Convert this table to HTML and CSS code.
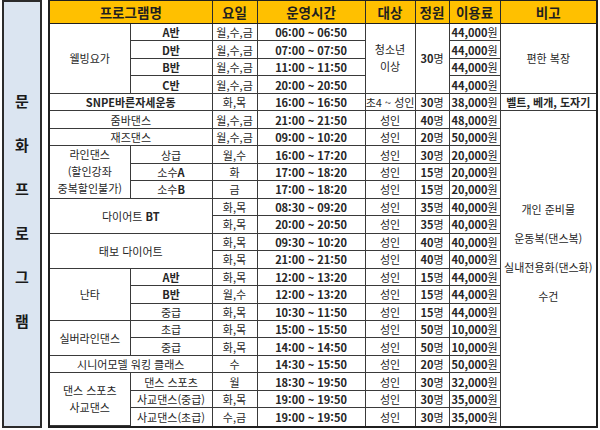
FILE: index.html
```html
<!DOCTYPE html>
<html lang="ko">
<head>
<meta charset="utf-8">
<title>문화프로그램</title>
<link rel="stylesheet" href="styles.css">
</head>
<body>
<div class="page">
  <div class="side">
    <span>문</span><span>화</span><span>프</span><span>로</span><span>그</span><span>램</span>
  </div>
  <div class="frame">
    <table class="tbl">
      <colgroup>
        <col class="c1"><col class="c2"><col class="c3"><col class="c4"><col class="c5"><col class="c6"><col class="c7"><col class="c8">
      </colgroup>
      <thead>
        <tr class="head">
          <th colspan="2">프로그램명</th><th>요일</th><th>운영시간</th><th>대상</th><th>정원</th><th>이용료</th><th>비고</th>
        </tr>
      </thead>
      <tbody>
        <tr><td rowspan="4">웰빙요가</td><td class="b">A반</td><td>월,수,금</td><td class="b">06:00 ~ 06:50</td><td rowspan="4" class="ml">청소년<br>이상</td><td rowspan="4" class="b">30<span class="u">명</span></td><td class="b">44,000<span class="u">원</span></td><td rowspan="4">편한 복장</td></tr>
        <tr class="in"><td class="b">D반</td><td>월,수,금</td><td class="b">07:00 ~ 07:50</td><td class="b">44,000<span class="u">원</span></td></tr>
        <tr class="in"><td class="b">B반</td><td>월,수,금</td><td class="b">11:00 ~ 11:50</td><td class="b">44,000<span class="u">원</span></td></tr>
        <tr class="in"><td class="b">C반</td><td>월,수,금</td><td class="b">20:00 ~ 20:50</td><td class="b">44,000<span class="u">원</span></td></tr>
        <tr><td colspan="2" class="b">SNPE바른자세운동</td><td>화,목</td><td class="b">16:00 ~ 16:50</td><td>초4 ~ 성인</td><td class="b">30<span class="u">명</span></td><td class="b">38,000<span class="u">원</span></td><td class="b">벨트, 베개, 도자기</td></tr>
        <tr><td colspan="2">줌바댄스</td><td>월,수,금</td><td class="b">21:00 ~ 21:50</td><td>성인</td><td class="b">40<span class="u">명</span></td><td class="b">48,000<span class="u">원</span></td>
          <td rowspan="18" class="note"><div class="notes"><span>개인 준비물</span><span>운동복(댄스복)</span><span>실내전용화(댄스화)</span><span>수건</span></div></td></tr>
        <tr><td colspan="2">재즈댄스</td><td>월,수,금</td><td class="b">09:00 ~ 10:20</td><td>성인</td><td class="b">20<span class="u">명</span></td><td class="b">50,000<span class="u">원</span></td></tr>
        <tr><td rowspan="3" class="ml">라인댄스<br>(할인강좌<br>중복할인불가)</td><td>상급</td><td>월,수</td><td class="b">16:00 ~ 17:20</td><td>성인</td><td class="b">30<span class="u">명</span></td><td class="b">20,000<span class="u">원</span></td></tr>
        <tr class="in"><td>소수<b>A</b></td><td>화</td><td class="b">17:00 ~ 18:20</td><td>성인</td><td class="b">15<span class="u">명</span></td><td class="b">20,000<span class="u">원</span></td></tr>
        <tr class="in"><td>소수<b>B</b></td><td>금</td><td class="b">17:00 ~ 18:20</td><td>성인</td><td class="b">15<span class="u">명</span></td><td class="b">20,000<span class="u">원</span></td></tr>
        <tr><td colspan="2" rowspan="2">다이어트 <b>BT</b></td><td>화,목</td><td class="b">08:30 ~ 09:20</td><td>성인</td><td class="b">35<span class="u">명</span></td><td class="b">40,000<span class="u">원</span></td></tr>
        <tr class="in"><td>화,목</td><td class="b">20:00 ~ 20:50</td><td>성인</td><td class="b">35<span class="u">명</span></td><td class="b">40,000<span class="u">원</span></td></tr>
        <tr><td colspan="2" rowspan="2">태보 다이어트</td><td>화,목</td><td class="b">09:30 ~ 10:20</td><td>성인</td><td class="b">40<span class="u">명</span></td><td class="b">40,000<span class="u">원</span></td></tr>
        <tr class="in"><td>화,목</td><td class="b">21:00 ~ 21:50</td><td>성인</td><td class="b">40<span class="u">명</span></td><td class="b">40,000<span class="u">원</span></td></tr>
        <tr><td rowspan="3">난타</td><td class="b">A반</td><td>화,목</td><td class="b">12:00 ~ 13:20</td><td>성인</td><td class="b">15<span class="u">명</span></td><td class="b">44,000<span class="u">원</span></td></tr>
        <tr class="in"><td class="b">B반</td><td>월,수</td><td class="b">12:00 ~ 13:20</td><td>성인</td><td class="b">15<span class="u">명</span></td><td class="b">44,000<span class="u">원</span></td></tr>
        <tr class="in"><td>중급</td><td>화,목</td><td class="b">10:30 ~ 11:50</td><td>성인</td><td class="b">15<span class="u">명</span></td><td class="b">44,000<span class="u">원</span></td></tr>
        <tr><td rowspan="2">실버라인댄스</td><td>초급</td><td>화,목</td><td class="b">15:00 ~ 15:50</td><td>성인</td><td class="b">50<span class="u">명</span></td><td class="b">10,000<span class="u">원</span></td></tr>
        <tr class="in"><td>중급</td><td>화,목</td><td class="b">14:00 ~ 14:50</td><td>성인</td><td class="b">50<span class="u">명</span></td><td class="b">10,000<span class="u">원</span></td></tr>
        <tr><td colspan="2">시니어모델 워킹 클래스</td><td>수</td><td class="b">14:30 ~ 15:50</td><td>성인</td><td class="b">20<span class="u">명</span></td><td class="b">50,000<span class="u">원</span></td></tr>
        <tr><td rowspan="3" class="ml">댄스 스포츠<br>사교댄스</td><td>댄스 스포츠</td><td>월</td><td class="b">18:30 ~ 19:50</td><td>성인</td><td class="b">30<span class="u">명</span></td><td class="b">32,000<span class="u">원</span></td></tr>
        <tr class="in"><td>사교댄스(중급)</td><td>화,목</td><td class="b">19:00 ~ 19:50</td><td>성인</td><td class="b">30<span class="u">명</span></td><td class="b">35,000<span class="u">원</span></td></tr>
        <tr class="in"><td>사교댄스(초급)</td><td>수,금</td><td class="b">19:00 ~ 19:50</td><td>성인</td><td class="b">30<span class="u">명</span></td><td class="b">35,000<span class="u">원</span></td></tr>
      </tbody>
    </table>
  </div>
</div>
</body>
</html>
```

FILE: styles.css
```css
html, body {
  margin: 0;
  padding: 0;
  background: #ffffff;
}

body {
  font-family: "Noto Sans CJK KR", "Noto Sans", sans-serif;
  color: #262626;
}

.page {
  display: flex;
  gap: 6px;
  padding: 0 2px 2px 2px;
  width: 600px;
  height: 430px;
  box-sizing: border-box;
}

.side {
  width: 40px;
  height: 428px;
  box-sizing: border-box;
  background: #dbe5f1;
  border: 2px solid #2b2b2b;
  display: flex;
  flex-direction: column;
  align-items: center;
  justify-content: center;
  padding-bottom: 6px;
}

.side span {
  display: block;
  height: 44px;
  line-height: 44px;
  font-size: 15px;
  font-weight: 700;
  color: #1a1a1a;
}

.frame {
  width: 550px;
  height: 428px;
  box-sizing: border-box;
  border: 2px solid #1f1f1f;
  border-top-width: 1px;
  overflow: hidden;
}

.tbl {
  width: 100%;
  height: 100%;
  border-collapse: collapse;
  table-layout: fixed;
  font-size: 11px;
}

.c1 { width: 80px; }
.c2 { width: 82px; }
.c3 { width: 45px; }
.c4 { width: 108px; }
.c5 { width: 50px; }
.c6 { width: 34px; }
.c7 { width: 51px; }
.c8 { width: 96px; }

.head th {
  height: 22px;
  background: #ffc000;
  font-size: 13.5px;
  font-weight: 700;
  color: #1f1f1f;
  border: 1px solid #2b2b2b;
  border-top: none;
  border-bottom: 1.5px solid #1f1f1f;
  padding: 0;
  line-height: 20px;
}

.head th:first-child { border-left: none; }
.head th:last-child { border-right: none; }

.tbl td {
  border: 1px solid #3a3a3a;
  text-align: center;
  vertical-align: middle;
  padding: 0;
  line-height: 16px;
  white-space: nowrap;
  overflow: hidden;
}

.tbl tbody tr { height: 17.4px; }

.tbl tr.in td { border-top-color: #8c8c8c; }

.tbl td:first-child { border-left: none; }
.tbl tr:last-child td { border-bottom: none; }
.tbl td.note { border-right: none; border-bottom: none; }
.tbl tbody tr:first-child td:last-child { border-right: none; }
.tbl tbody tr:nth-child(5) td:last-child { border-right: none; }

.b { font-weight: 700; }

.u { font-weight: 400; }

.ml { line-height: 17px !important; }

.notes {
  display: flex;
  flex-direction: column;
  align-items: center;
  padding-bottom: 30px;
}

.notes span {
  display: block;
  line-height: 29px;
}
```
